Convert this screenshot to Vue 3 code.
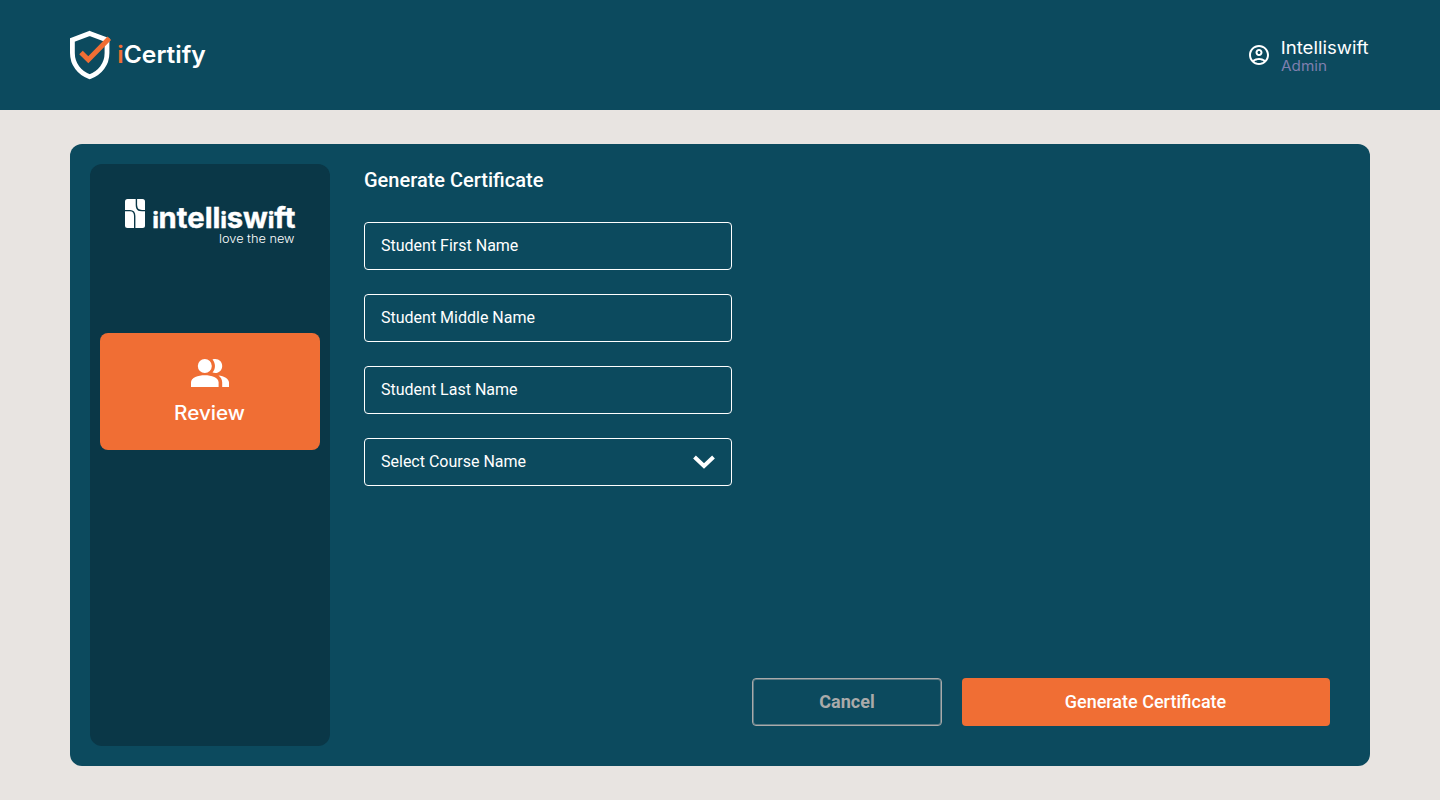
<script setup>
const fields = ['Student First Name', 'Student Middle Name', 'Student Last Name']
</script>

<template>
  <div class="page">
    <header class="topbar">
      <svg class="brand" width="140" height="52" viewBox="0 0 140 52">
        <path d="M19.7 4.4 L37 10.9 V24 C37 35 30 44.3 19.7 47.7 C9.4 44.3 2.4 35 2.4 24 V10.9 Z" fill="none" stroke="#fff" stroke-width="4.8" />
        <path d="M11 23.5 L18.3 30.8 L39.3 9.3" fill="none" stroke="#f06e34" stroke-width="5" />
        <text class="geo semi" x="47.3" y="34" font-size="24" textLength="88.5" lengthAdjust="spacingAndGlyphs" fill="#fff"><tspan fill="#f06e34">i</tspan>Certify</text>
      </svg>
      <div class="user">
        <svg width="24" height="24" viewBox="0 0 24 24" fill="#fff">
          <path d="M12 2C6.48 2 2 6.48 2 12s4.48 10 10 10 10-4.48 10-10S17.52 2 12 2zM7.35 18.5C8.66 17.56 10.26 17 12 17s3.34.56 4.65 1.5C15.34 19.44 13.74 20 12 20s-3.34-.56-4.65-1.5zm10.79-1.38C16.45 15.8 14.32 15 12 15s-4.45.8-6.14 2.12C4.7 15.73 4 13.95 4 12c0-4.42 3.58-8 8-8s8 3.58 8 8c0 1.95-.7 3.73-1.86 5.12z" />
          <path d="M12 6c-1.93 0-3.5 1.57-3.5 3.5S10.07 13 12 13s3.5-1.57 3.5-3.5S13.93 6 12 6zm0 5c-.83 0-1.5-.67-1.5-1.5S11.17 8 12 8s1.5.67 1.5 1.5S12.83 11 12 11z" />
        </svg>
        <svg class="identity" width="90" height="40" viewBox="0 0 90 40">
          <text class="geo" x="-0.3" y="19" font-size="17.6" textLength="88" lengthAdjust="spacingAndGlyphs" fill="#fff">Intelliswift</text>
          <text class="geo admin" x="0" y="36.3" font-size="14" textLength="46" lengthAdjust="spacingAndGlyphs" fill="#7f7fae">Admin</text>
        </svg>
      </div>
    </header>

    <main class="panel">
      <aside class="sidebar">
        <svg class="company" width="172" height="50" viewBox="0 0 172 50" fill="#fff">
          <rect width="20" height="29" rx="2.5" />
          <path d="M11.4 -0.5V6Q11.4 11.6 17 11.6H20.5M-0.5 11.6H5Q9.7 11.6 9.7 17V29.5M11.4 6Q11.4 10 14 11.4" fill="none" stroke="#0a3747" stroke-width="1.4" />
          <text class="company-name" x="27.4" y="28.7" font-size="28.6" textLength="143" lengthAdjust="spacingAndGlyphs"><tspan class="short">i</tspan>ntell<tspan class="short">i</tspan>sw<tspan class="short">i</tspan>ft</text>
          <text class="motto" x="94" y="44" font-size="12.2" textLength="75.5" lengthAdjust="spacingAndGlyphs">love the new</text>
        </svg>
        <div class="nav-item">
          <svg width="38" height="28" viewBox="0 0 38 28" fill="#fff">
            <circle cx="13.8" cy="7" r="7" />
            <path d="M0 28V23.5C0 18.5 7 16.2 13.8 16.2S27.6 18.5 27.6 23.5V28Z" />
            <path d="M21.5 .4C27 -1.3 31.2 2.3 31.2 7S27 15.3 21.5 13.6C24.8 9.5 24.8 4.5 21.5 .4Z" />
            <path d="M27.5 16.4C33 17 38 19.5 38 23.5V28H31.2V23.5C31.2 20.5 29.8 18.2 27.5 16.4Z" />
          </svg>
          <svg class="nav-label" width="72" height="24" viewBox="0 0 72 24">
            <text class="geo medium" x="0" y="19.3" font-size="19.5" textLength="71" lengthAdjust="spacingAndGlyphs" fill="#fff">Review</text>
          </svg>
        </div>
      </aside>

      <section class="content">
        <h1>Generate Certificate</h1>
        <div class="form">
          <div v-for="field in fields" :key="field" class="field"><span>{{ field }}</span></div>
          <div class="field">
            <span>Select Course Name</span>
            <svg width="22" height="14" viewBox="0 0 22 14"><path d="M1.5 2 L11 10.9 L20.5 2" fill="none" stroke="#fff" stroke-width="4" /></svg>
          </div>
        </div>
        <div class="actions">
          <button class="cancel">Cancel</button>
          <button class="submit">Generate Certificate</button>
        </div>
      </section>
    </main>
  </div>
</template>

<style>
body { margin: 0; background: #e8e4e1; }
</style>

<style scoped>
* { box-sizing: border-box; }
.page { height: 800px; background: #e8e4e1; font-family: Roboto, "Liberation Sans", sans-serif; color: #fff; overflow: hidden; }
svg { display: block; flex: none; overflow: visible; }
.company { overflow: hidden; }
.topbar { height: 110px; padding: 0 71px 0 70px; background: #0c4a5e; display: flex; align-items: center; justify-content: space-between; }
.user { display: flex; align-items: center; gap: 10px; margin-right: -2px; }
.geo { font-family: Inter, "Open Sans", sans-serif; }
.semi { font-weight: 600; }
.medium { font-weight: 500; }
.admin { font-weight: 400; }
.panel { margin: 34px 70px 0; height: 622px; padding: 20px; border-radius: 12px; background: #0c4a5e; display: flex; gap: 34px; }
.sidebar { width: 240px; border-radius: 12px; background: #0a3747; padding: 35px 10px 0; flex: none; }
.company { margin-left: 25px; }
.company-name { font-family: Inter, "Open Sans", sans-serif; font-weight: 700; stroke: #fff; stroke-width: 0.4px; }
.short { font-size: 21.5px; font-weight: 800; }
.motto { font-family: Inter, sans-serif; font-weight: 300; }
.nav-item { margin-top: 84px; height: 117px; border-radius: 8px; background: #f06e34; display: flex; flex-direction: column; align-items: center; padding-top: 26px; gap: 14px; }
.content { flex: 1; padding: 4px 20px 20px 0; display: flex; flex-direction: column; }
h1 { margin: 0 0 30px; font-size: 20px; line-height: 24px; font-weight: 500; }
.form { width: 368px; display: grid; gap: 24px; }
.field { height: 48px; border: 1px solid #fff; border-radius: 4px; padding: 0 16px; font-size: 16px; display: flex; align-items: center; justify-content: space-between; }
.field span { padding-bottom: 2px; }
.actions { margin-top: auto; display: flex; justify-content: flex-end; gap: 20px; }
button { height: 48px; border-radius: 4px; padding: 0 0 2px; font: 500 18px Roboto, sans-serif; }
.cancel { width: 190px; background: transparent; border: 1px solid #aaa; box-shadow: inset 0 0 0 1px rgba(170, 170, 170, 0.5); color: #aaa; font-weight: 700; }
.submit { width: 368px; background: #f06e34; border: 0; color: #fff; padding-right: 1px; }
</style>
